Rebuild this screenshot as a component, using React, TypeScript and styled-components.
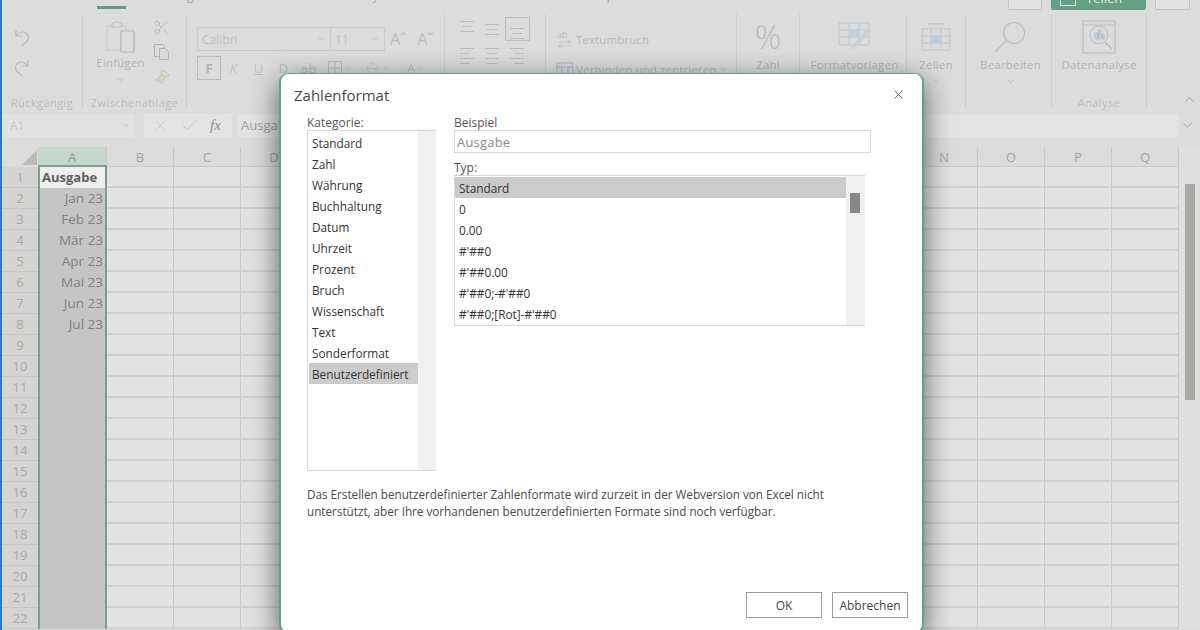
import React from "react";
import styled, { createGlobalStyle } from "styled-components";
import { ChevronDown, ChevronUp, PaintBucket, Scissors, X, Check } from "lucide-react";

const categories = [
  "Standard",
  "Zahl",
  "Währung",
  "Buchhaltung",
  "Datum",
  "Uhrzeit",
  "Prozent",
  "Bruch",
  "Wissenschaft",
  "Text",
  "Sonderformat",
  "Benutzerdefiniert",
];
const formats = ["Standard", "0", "0.00", "#'##0", "#'##0.00", "#'##0;-#'##0", "#'##0;[Rot]-#'##0"];
const columns = "ABCDEFGHIJKLMNOPQ".split("");
const dates = ["Jan 23", "Feb 23", "Mär 23", "Apr 23", "Mai 23", "Jun 23", "Jul 23"];
const rows = Array.from({ length: 22 }, (_, i) => i + 1);

const UndoIcon = ({ flip }: { flip?: boolean }) => (
  <svg
    width="20"
    height="20"
    viewBox="0 0 20 20"
    fill="none"
    stroke="#b9b9b9"
    strokeWidth="1.2"
    style={flip ? { transform: "scaleX(-1)" } : undefined}
  >
    <path d="M4 2v6h6" />
    <path d="M4 8c3-4 7-5 10-3 4 3 3 8-1 10l-3 3" />
  </svg>
);

const ClipboardIcon = () => (
  <svg width="32" height="34" viewBox="0 0 32 34" fill="none">
    <path d="M2 6h19v24H2z" stroke="#d6cfbf" strokeWidth="1.4" />
    <path d="M7 6V3h3l2-2 2 2h3v4H7z" stroke="#bdbdbd" fill="#dcdcdc" />
    <path d="M16 11h13v21H16z" stroke="#b2b2b2" fill="#dedede" strokeWidth="1.2" />
  </svg>
);

const CopyIcon = () => (
  <svg width="18" height="18" viewBox="0 0 18 18" fill="none" stroke="#b4b4b4">
    <path d="M1.5 1.5h8l2 2v10h-10z" />
    <path d="M6.5 5.5h6l3 3v8h-9z" fill="#dcdcdc" />
  </svg>
);

const PainterIcon = () => (
  <svg width="18" height="18" viewBox="0 0 18 18" fill="none">
    <path d="M10 2l6 5-3 2-5-4z" stroke="#bdbdbd" />
    <path d="M8 6l4 4-3 5-7-3 3-1z" fill="#dcd3bf" stroke="#d2c5a8" />
  </svg>
);

const BorderIcon = () => (
  <svg width="16" height="16" viewBox="0 0 16 16" fill="none" stroke="#bcbcbc">
    <path d="M1.5 1.5h13v13h-13zM8 1.5v13M1.5 8h13" />
  </svg>
);

// vertical alignment buttons: three lines at a given offset
const AlignIcon = ({ top }: { top: number }) => (
  <svg width="16" height="20" viewBox="0 0 16 20" stroke="#bcbcbc">
    <path d={`M1 ${top}.5h14M3 ${top + 5}.5h10M1 ${top + 10}.5h14`} />
  </svg>
);

// horizontal alignment buttons: four lines, the short ones pushed to one side
const TextAlignIcon = ({ from, to }: { from: number; to: number }) => (
  <svg width="16" height="20" viewBox="0 0 16 20" stroke="#bcbcbc">
    <path d={`M1 3.5h14M${from} 8.5H${to}M1 13.5h14M${from} 18.5H${to}`} />
  </svg>
);

const WrapIcon = () => (
  <svg width="18" height="20" viewBox="0 0 18 20" fill="none" stroke="#c2c2c2">
    <path d="M2 13h13M2 17h13M12 11l3 2-3 2M5 15l-3 2 3 2" />
    <text x="1" y="9" fontSize="9" fontFamily="Open Sans" fill="#bbb" stroke="none">
      ab
    </text>
  </svg>
);

const MergeIcon = () => (
  <svg width="18" height="14" viewBox="0 0 18 14" fill="none" stroke="#9fb4c4">
    <path d="M1 1h16v12H1zM1 5h16M6 5v8M12 5v8" />
  </svg>
);

const StylesIcon = () => (
  <svg width="34" height="30" viewBox="0 0 34 30" fill="none">
    <path d="M1 1h30v22H1zM1 8h30M1 15h30M11 1v22M21 1v22" stroke="#c0c6c8" />
    <path d="M11 8h10v7H11z" fill="#bfcfdb" />
    <path d="M13 28l3-7 14-15 3 3-14 15z" fill="#c5d3de" />
  </svg>
);

const CellsIcon = () => (
  <svg width="32" height="28" viewBox="0 0 32 28" fill="none">
    <path d="M8 1h16" stroke="#bbb" />
    <path d="M2 6h28v21H2zM2 13h28M2 20h28M11 6v21M21 6v21" stroke="#c0c6c8" />
    <path d="M11 13h10v7H11z" fill="#bacbda" />
  </svg>
);

const SearchIcon = () => (
  <svg width="32" height="32" viewBox="0 0 32 32" fill="none" stroke="#bdbdbd" strokeWidth="1.2">
    <circle cx="20" cy="12" r="10.5" />
    <path d="M12.5 19.5L1 31" />
  </svg>
);

const AnalysisIcon = () => (
  <svg width="34" height="34" viewBox="0 0 34 34" fill="none" stroke="#bcbcbc">
    <path d="M1 1h32v32H1zM1 5h32" strokeWidth="1.2" />
    <circle cx="17" cy="15" r="9" />
    <path d="M23 22l7 7" strokeWidth="1.5" />
    <path d="M13 13h2.5v6H13zM16.5 10h2.5v9h-2.5zM20 14h2v5h-2z" fill="#c7d0d6" stroke="#b5bdc4" />
  </svg>
);

const App = () => (
  <Page>
    <GlobalStyle />
    <TopBar>
      <Tabs>
        <Tab>Datei</Tab>
        <ActiveTab>Start</ActiveTab>
        <Tab>Einfügen</Tab>
        <Tab>Zeichnen</Tab>
        <Tab>Seitenlayout</Tab>
        <Tab>Formeln</Tab>
        <Tab>Daten</Tab>
        <Tab>Überprüfen</Tab>
        <Tab>Ansicht</Tab>
      </Tabs>
      <TopActions>
        <TopButton $width={34} />
        <ShareButton>
          <ShareBox />
          <ShareText>Teilen</ShareText>
        </ShareButton>
        <TopButton $width={35} />
      </TopActions>
    </TopBar>

    <Ribbon>
      <Group $width={81}>
        <HistoryStack>
          <UndoIcon />
          <UndoIcon flip />
        </HistoryStack>
        <GroupLabel>Rückgängig</GroupLabel>
      </Group>
      <Group $width={104}>
        <PasteArea>
          <BigAction $labelGap={0}>
            <ActionIcon>
              <ClipboardIcon />
            </ActionIcon>
            <ActionLabel>Einfügen</ActionLabel>
            <ChevronDown size={11} color="#bbb" />
          </BigAction>
          <ClipboardTools>
            <Scissors size={17} strokeWidth={1.1} color="#b2b2b2" />
            <CopyIcon />
            <PainterIcon />
          </ClipboardTools>
        </PasteArea>
        <GroupLabel>Zwischenablage</GroupLabel>
      </Group>
      <Group $width={258}>
        <FontArea>
          <FontRow>
            <Combo $width={134}>
              Calibri <ChevronDown size={10} />
            </Combo>
            <Combo $width={55}>
              11 <ChevronDown size={10} />
            </Combo>
            <FontSizeGlyph>Aˆ</FontSizeGlyph>
            <FontSizeGlyph>Aˇ</FontSizeGlyph>
          </FontRow>
          <FontRow>
            <BoldBox>F</BoldBox>
            <FontGlyph $italic>K</FontGlyph>
            <FontGlyph $underline>U</FontGlyph>
            <FontGlyph>D</FontGlyph>
            <FontGlyph $strike>ab</FontGlyph>
            <DropTool>
              <BorderIcon />
              <ChevronDown size={9} />
            </DropTool>
            <DropTool>
              <PaintBucket size={15} strokeWidth={1.1} />
              <ChevronDown size={9} />
            </DropTool>
            <DropTool>
              <FontGlyph $underline>A</FontGlyph>
              <ChevronDown size={9} />
            </DropTool>
          </FontRow>
        </FontArea>
      </Group>
      <Group $width={101}>
        <AlignGrid>
          <AlignCell>
            <AlignIcon top={2} />
          </AlignCell>
          <AlignCell>
            <AlignIcon top={5} />
          </AlignCell>
          <AlignCell $active>
            <AlignIcon top={9} />
          </AlignCell>
          <AlignCell>
            <TextAlignIcon from={1} to={11} />
          </AlignCell>
          <AlignCell>
            <TextAlignIcon from={3} to={13} />
          </AlignCell>
          <AlignCell>
            <TextAlignIcon from={5} to={15} />
          </AlignCell>
        </AlignGrid>
      </Group>
      <Group $width={191}>
        <WrapArea>
          <WrapRow>
            <WrapIcon />
            Textumbruch
          </WrapRow>
          <WrapRow>
            <MergeIcon />
            Verbinden und zentrieren
            <ChevronDown size={10} />
          </WrapRow>
        </WrapArea>
      </Group>
      <Group $width={63}>
        <BigAction>
          <ActionIcon>
            <Percent>%</Percent>
          </ActionIcon>
          <ActionLabel>Zahl</ActionLabel>
          <ChevronDown size={11} color="#bbb" />
        </BigAction>
      </Group>
      <Group $width={107}>
        <BigAction $shift={3}>
          <ActionIcon>
            <StylesIcon />
          </ActionIcon>
          <ActionLabel>Formatvorlagen</ActionLabel>
        </BigAction>
      </Group>
      <Group $width={59}>
        <BigAction>
          <ActionIcon>
            <CellsIcon />
          </ActionIcon>
          <ActionLabel>Zellen</ActionLabel>
          <ChevronDown size={11} color="#bbb" />
        </BigAction>
      </Group>
      <Group $width={86}>
        <BigAction $shift={4}>
          <ActionIcon>
            <SearchIcon />
          </ActionIcon>
          <ActionLabel>Bearbeiten</ActionLabel>
          <ChevronDown size={11} color="#bbb" />
        </BigAction>
      </Group>
      <Group $width={95}>
        <BigAction>
          <ActionIcon>
            <AnalysisIcon />
          </ActionIcon>
          <ActionLabel>Datenanalyse</ActionLabel>
        </BigAction>
        <GroupLabel>Analyse</GroupLabel>
      </Group>
      <CollapseSlot>
        <ChevronUp size={15} strokeWidth={1.5} color="#9d9d9d" />
      </CollapseSlot>
    </Ribbon>

    <FormulaBar>
      <NameBox>
        A1 <ChevronDown size={11} />
      </NameBox>
      <FormulaButtons>
        <X size={17} strokeWidth={1} color="#c2c2c2" />
        <Check size={19} strokeWidth={1} color="#c2c2c2" />
        <FxLabel>fx</FxLabel>
      </FormulaButtons>
      <FormulaInput>Ausgabe</FormulaInput>
      <ChevronDown size={15} strokeWidth={1.5} color="#9d9d9d" />
    </FormulaBar>

    <SheetArea>
      <Sheet>
        <Corner>
          <CornerMark />
        </Corner>
        {columns.map((col) => (
          <ColumnHead key={col} $selected={col === "A"}>
            {col}
          </ColumnHead>
        ))}
        {rows.map((row) => (
          <React.Fragment key={row}>
            <RowHead>{row}</RowHead>
            {columns.map((col) =>
              col === "A" ? (
                <SelectedCell key={col} $first={row === 1}>
                  {row === 1 ? "Ausgabe" : dates[row - 2]}
                </SelectedCell>
              ) : (
                <Cell key={col} />
              ),
            )}
          </React.Fragment>
        ))}
      </Sheet>
      <ScrollTrack>
        <ScrollThumb />
      </ScrollTrack>
    </SheetArea>

    <Dialog>
      <DialogHeader>
        <DialogTitle>Zahlenformat</DialogTitle>
        <X size={15} strokeWidth={1.4} color="#555" />
      </DialogHeader>
      <DialogBody>
        <div>
          <FieldLabel>Kategorie:</FieldLabel>
          <CategoryBox>
            <CategoryList>
              {categories.map((item) => (
                <ListItem key={item} $selected={item === "Benutzerdefiniert"}>
                  {item}
                </ListItem>
              ))}
            </CategoryList>
            <CategoryScroll />
          </CategoryBox>
        </div>
        <div>
          <FieldLabel>Beispiel</FieldLabel>
          <SampleBox>Ausgabe</SampleBox>
          <TypeLabel>Typ:</TypeLabel>
          <TypeBox>
            <TypeList>
              {formats.map((item) => (
                <ListItem key={item} $selected={item === "Standard"} $inset={4}>
                  {item}
                </ListItem>
              ))}
            </TypeList>
            <TypeScroll>
              <TypeThumb />
            </TypeScroll>
          </TypeBox>
        </div>
      </DialogBody>
      <Note>
        Das Erstellen benutzerdefinierter Zahlenformate wird zurzeit in der Webversion von Excel nicht
        <br />
        unterstützt, aber Ihre vorhandenen benutzerdefinierten Formate sind noch verfügbar.
      </Note>
      <DialogFooter>
        <FooterButton>OK</FooterButton>
        <FooterButton>Abbrechen</FooterButton>
      </DialogFooter>
    </Dialog>
  </Page>
);

const GlobalStyle = createGlobalStyle`
  html, body {
    margin: 0;
    padding: 0;
    overflow: hidden;
  }
  body {
    font-family: "Open Sans", "Liberation Sans", sans-serif;
  }
`;

const Page = styled.div`
  position: relative;
  box-sizing: border-box;
  width: 1200px;
  height: 630px;
  overflow: hidden;
  background: #dcdcdc;
  border-left: 2px solid #2a78c4;
`;

const TopBar = styled.div`
  display: flex;
  justify-content: space-between;
  height: 14px;
  overflow: hidden;
`;

const Tabs = styled.div`
  display: flex;
  gap: 30px;
  height: 9px;
  padding-left: 33px;
`;

// the tab row is scrolled almost off the page, only descenders are left
const Tab = styled.span`
  display: block;
  margin-top: -13px;
  font-size: 13px;
  line-height: 16px;
  white-space: nowrap;
  color: #a8a8a8;
`;

const ActiveTab = styled(Tab)`
  height: 19px;
  color: transparent;
  border-bottom: 3px solid #5f9f80;
`;

const TopActions = styled.div`
  display: flex;
  gap: 9px;
  padding-right: 10px;
  height: 10px;
`;

const TopButton = styled.div<{ $width: number }>`
  box-sizing: border-box;
  width: ${({ $width }) => $width}px;
  border: 1px solid #c4c4c4;
  border-top: 0;
  border-radius: 0 0 2px 2px;
  background: #e2e2e2;
`;

const ShareButton = styled.div`
  box-sizing: border-box;
  display: flex;
  gap: 10px;
  width: 95px;
  padding-left: 9px;
  overflow: hidden;
  background: #66a084;
  border-radius: 0 0 2px 2px;
`;

const ShareBox = styled.div`
  width: 14px;
  height: 5px;
  border: 1px solid #e6e6e6;
  border-top: 0;
`;

const ShareText = styled.span`
  margin-top: -10px;
  font-size: 13px;
  line-height: 16px;
  color: #ececec;
`;

const Ribbon = styled.div`
  box-sizing: border-box;
  display: flex;
  height: 94px;
`;

const Group = styled.section<{ $width: number }>`
  position: relative;
  box-sizing: border-box;
  width: ${({ $width }) => $width}px;
  flex: none;
  border-right: 1px solid #cdcdcd;
  display: flex;
  flex-direction: column;
  align-items: center;
`;

const GroupLabel = styled.div`
  position: absolute;
  bottom: -2px;
  left: 0;
  right: 0;
  text-align: center;
  font-size: 11px;
  line-height: 14px;
  letter-spacing: 0.4px;
  color: #bdbdbd;
`;

const HistoryStack = styled.div`
  display: flex;
  flex-direction: column;
  gap: 10px;
  padding: 14px 40px 0 0;
`;

const PasteArea = styled.div`
  display: flex;
  gap: 8px;
  padding-right: 2px;
`;

const ClipboardTools = styled.div`
  display: flex;
  flex-direction: column;
  align-items: center;
  gap: 7px;
  padding-top: 5px;
`;

const BigAction = styled.div<{ $shift?: number; $labelGap?: number }>`
  display: flex;
  flex-direction: column;
  align-items: center;
  padding-top: 5px;
  margin-left: ${({ $shift }) => $shift ?? 0}px;

  & > div:nth-child(2) {
    margin-top: ${({ $labelGap }) => $labelGap ?? 2}px;
  }
`;

const ActionIcon = styled.div`
  height: 36px;
  display: flex;
  align-items: center;
  justify-content: center;
`;

const ActionLabel = styled.div`
  font-size: 11.5px;
  line-height: 16px;
  margin-bottom: 3px;
  letter-spacing: 0.2px;
  white-space: nowrap;
  color: #b4b4b4;
`;

const FontArea = styled.div`
  display: flex;
  flex-direction: column;
  gap: 5px;
  width: 100%;
  padding: 13px 0 0 10px;
  box-sizing: border-box;
`;

const FontRow = styled.div`
  display: flex;
  align-items: center;
  height: 24px;
`;

const Combo = styled.div<{ $width: number }>`
  box-sizing: border-box;
  display: flex;
  align-items: center;
  justify-content: space-between;
  width: ${({ $width }) => $width}px;
  height: 24px;
  padding: 0 4px;
  border: 1px solid #cacaca;
  margin-right: -1px;
  font-size: 12px;
  color: #c0c0c0;
`;

const FontSizeGlyph = styled.span`
  width: 25px;
  margin-left: 2px;
  text-align: center;
  font-size: 16px;
  color: #bdbdbd;
`;

const BoldBox = styled.div`
  box-sizing: border-box;
  width: 24px;
  height: 24px;
  border: 1px solid #bcbcbc;
  text-align: center;
  font-size: 13px;
  font-weight: 700;
  line-height: 22px;
  color: #b0b0b0;
`;

const FontGlyph = styled.span<{ $italic?: boolean; $underline?: boolean; $strike?: boolean }>`
  width: 25px;
  text-align: center;
  font-size: 13px;
  color: #bfbfbf;
  font-style: ${({ $italic }) => ($italic ? "italic" : "normal")};
  text-decoration: ${({ $underline, $strike }) =>
    $underline ? "underline" : $strike ? "line-through" : "none"};
`;

const DropTool = styled.div`
  display: flex;
  align-items: center;
  justify-content: center;
  gap: 1px;
  width: 38px;
  color: #bcbcbc;

  & > span {
    width: auto;
  }
`;

const AlignGrid = styled.div`
  display: grid;
  grid-template-columns: repeat(3, 25px);
  grid-template-rows: 24px 20px;
  gap: 4px 0;
  padding: 3px 6px 0 0;
`;

const AlignCell = styled.div<{ $active?: boolean }>`
  display: flex;
  align-items: center;
  justify-content: center;
  box-sizing: border-box;
  border: ${({ $active }) => ($active ? "1px solid #bdbdbd" : "0")};
`;

const WrapArea = styled.div`
  display: flex;
  flex-direction: column;
  gap: 10px;
  width: 100%;
  padding: 15px 0 0 10px;
  box-sizing: border-box;
`;

const WrapRow = styled.div`
  display: flex;
  align-items: center;
  gap: 2px;
  height: 20px;
  font-size: 11.5px;
  letter-spacing: 0.1px;
  white-space: nowrap;
  color: #b8b8b8;
`;

const Percent = styled.span`
  font-size: 33px;
  font-weight: 300;
  line-height: 32px;
  color: #bcbcbc;
`;

const CollapseSlot = styled.div`
  flex: 1;
  display: flex;
  align-items: flex-end;
  justify-content: flex-end;
  padding: 0 3px 1px 0;
`;

const FormulaBar = styled.div`
  display: flex;
  align-items: center;
  height: 23px;
  margin-top: 6px;
  padding-right: 5px;
`;

const NameBox = styled.div`
  box-sizing: border-box;
  display: flex;
  align-items: center;
  justify-content: space-between;
  width: 133px;
  height: 23px;
  padding: 0 4px 0 8px;
  background: #e2e2e2;
  font-size: 12px;
  color: #c6c6c6;
`;

const FormulaButtons = styled.div`
  box-sizing: border-box;
  display: flex;
  align-items: center;
  gap: 11px;
  width: 88px;
  height: 23px;
  margin-left: 9px;
  padding-left: 8px;
  background: #e4e4e4;
`;

const FxLabel = styled.span`
  font-family: "Liberation Serif", serif;
  font-style: italic;
  font-size: 15px;
  color: #8f8f8f;
`;

const FormulaInput = styled.div`
  flex: 1;
  height: 23px;
  margin: 0 1px 0 6px;
  padding-left: 3px;
  background: #e3e3e3;
  font-size: 13px;
  line-height: 23px;
  color: #a2a2a2;
`;

const SheetArea = styled.div`
  display: flex;
  margin-top: 10px;
  background: #e2e2e2;
`;

const Sheet = styled.div`
  display: grid;
  grid-template-columns: 36px 69px repeat(16, 67px);
  grid-auto-rows: 21px;
  grid-template-rows: 20px;
  width: 1177px;
  flex: none;
`;

const Corner = styled.div`
  display: flex;
  align-items: flex-end;
  justify-content: flex-end;
  background: #dcdcdc;
`;

const CornerMark = styled.div`
  width: 0;
  height: 0;
  margin: 0 1px 2px 0;
  border-left: 15px solid transparent;
  border-bottom: 15px solid #bcbcbc;
`;

const ColumnHead = styled.div<{ $selected?: boolean }>`
  text-align: center;
  font-size: 13px;
  line-height: 20px;
  background: ${({ $selected }) => ($selected ? "#c6d8ce" : "#dbdbdb")};
  color: ${({ $selected }) => ($selected ? "#84a092" : "#a4a4a4")};
  border-right: 1px solid #c8c8c8;
  border-bottom: 1px solid #cccccc;
  box-sizing: border-box;
`;

const RowHead = styled.div`
  text-align: center;
  font-size: 13px;
  line-height: 20px;
  background: #d6d4d2;
  color: #a2aca6;
  border-bottom: 1px solid #c6c6c6;
  box-sizing: border-box;
`;

const Cell = styled.div`
  box-sizing: border-box;
  background: #e2e2e2;
  border-right: 1px solid #c9c9c9;
  border-bottom: 2px solid #d0d0d0;
`;

const SelectedCell = styled.div<{ $first?: boolean }>`
  box-sizing: border-box;
  background: ${({ $first }) => ($first ? "#efefef" : "#c5c5c5")};
  border-left: 2px solid #7c9f8d;
  border-right: 2px solid #7c9f8d;
  padding: 0 2px;
  text-align: ${({ $first }) => ($first ? "left" : "right")};
  font-size: ${({ $first }) => ($first ? 13 : 13.5)}px;
  line-height: 21px;
  font-weight: ${({ $first }) => ($first ? 700 : 400)};
  color: ${({ $first }) => ($first ? "#5e5e5e" : "#808080")};
  box-shadow: ${({ $first }) => ($first ? "0 -2px 0 #7c9f8d" : "none")};
`;

const ScrollTrack = styled.div`
  width: 21px;
  padding: 37px 0 0 6px;
  box-sizing: border-box;
  background: #dedede;
`;

const ScrollThumb = styled.div`
  width: 10px;
  height: 216px;
  background: #a8a8a4;
`;

const Dialog = styled.div`
  position: absolute;
  left: 277px;
  top: 73px;
  box-sizing: border-box;
  display: flex;
  flex-direction: column;
  width: 645px;
  height: 560px;
  background: #fff;
  border: 2px solid #66a084;
  border-width: 1px 2px;
  border-radius: 9px;
  box-shadow: 0 8px 28px rgba(0, 0, 0, 0.6);
`;

const DialogHeader = styled.header`
  display: flex;
  align-items: center;
  justify-content: space-between;
  height: 40px;
  padding: 0 16px 0 13px;
`;

const DialogTitle = styled.h2`
  margin: 0;
  padding-top: 2px;
  font-size: 15px;
  font-weight: 400;
  color: #4a4a4a;
`;

const DialogBody = styled.div`
  display: grid;
  grid-template-columns: 129px 417px;
  column-gap: 18px;
  padding-left: 26px;
`;

const FieldLabel = styled.div`
  padding-top: 2px;
  font-size: 12px;
  line-height: 14px;
  color: #555;
`;

const TypeLabel = styled(FieldLabel)`
  margin-top: 6px;
`;

const CategoryBox = styled.div`
  display: flex;
  box-sizing: border-box;
  height: 341px;
  border: 1px solid #d8d8d8;
  border-right: 0;
`;

const CategoryList = styled.div`
  flex: 1;
  padding: 1px 0 0 1px;
`;

const CategoryScroll = styled.div`
  width: 18px;
  background: #f0f0f0;
`;

const ListItem = styled.div<{ $selected?: boolean; $inset?: number }>`
  box-sizing: border-box;
  height: 21px;
  padding-top: 2px;
  padding-left: ${({ $inset }) => $inset ?? 3}px;
  font-size: 11.8px;
  line-height: 19px;
  white-space: nowrap;
  color: #333;
  background: ${({ $selected }) => ($selected ? "#cbcbcb" : "transparent")};
`;

const SampleBox = styled.div`
  box-sizing: border-box;
  height: 23px;
  padding: 2px 0 0 2px;
  border: 1px solid #d8d8d8;
  font-size: 13px;
  line-height: 19px;
  letter-spacing: 0.2px;
  color: #8a8a8a;
`;

const TypeBox = styled.div`
  display: flex;
  box-sizing: border-box;
  width: 411px;
  height: 151px;
  border: 1px solid #d8d8d8;
  border-right: 0;
`;

const TypeList = styled.div`
  flex: 1;
  padding-top: 1px;
  overflow: hidden;
`;

const TypeScroll = styled.div`
  width: 19px;
  padding: 17px 0 0 4px;
  box-sizing: border-box;
  background: #f0f0f0;
`;

const TypeThumb = styled.div`
  width: 10px;
  height: 20px;
  background: #888;
`;

const Note = styled.p`
  margin: 15px 0 0;
  padding-left: 26px;
  font-size: 11.7px;
  line-height: 17px;
  white-space: nowrap;
  color: #4a4a4a;
`;

const DialogFooter = styled.footer`
  display: flex;
  justify-content: flex-end;
  gap: 10px;
  margin-top: auto;
  padding: 0 14px 14px 0;
`;

const FooterButton = styled.button`
  box-sizing: border-box;
  width: 76px;
  height: 26px;
  padding: 0;
  background: #fff;
  border: 1px solid #9a9a9a;
  font-family: inherit;
  font-size: 12px;
  color: #444;
`;

export default App;
